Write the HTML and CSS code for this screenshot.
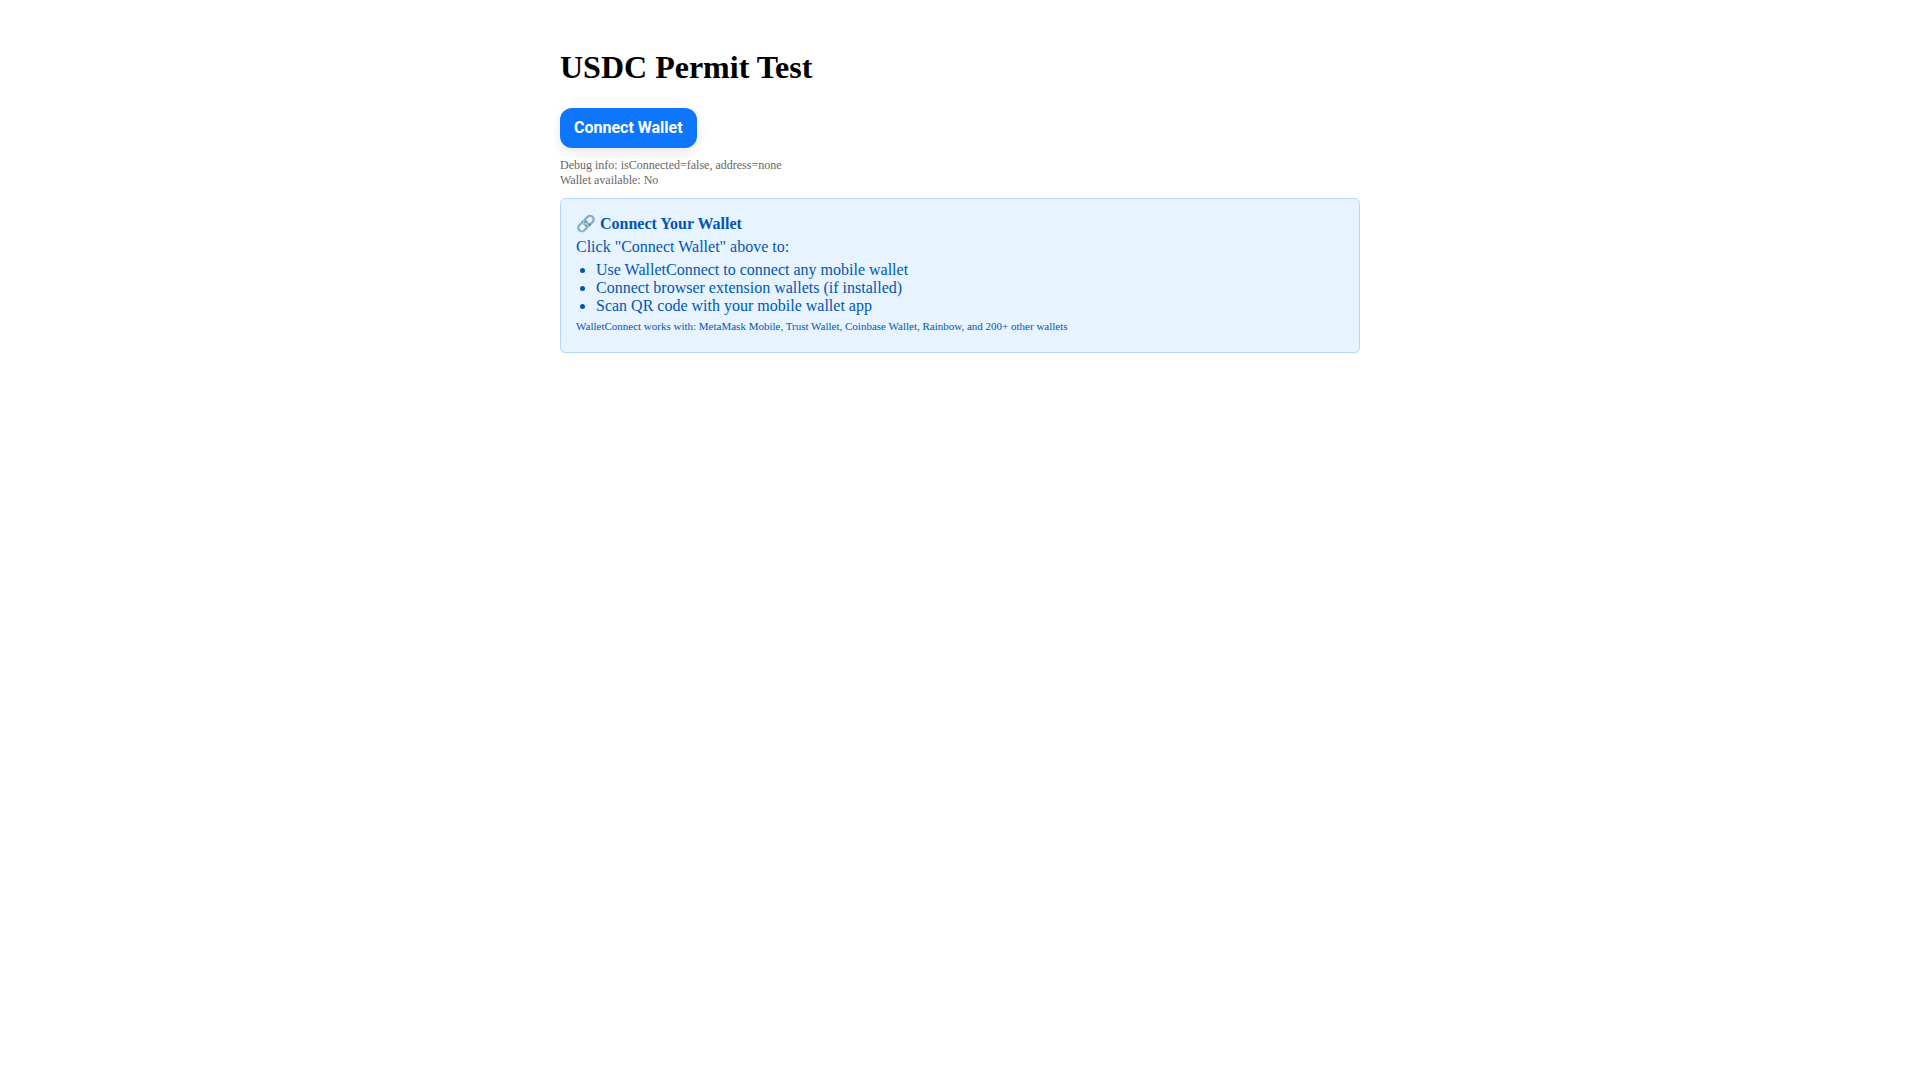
FILE: index.html
```html
<!DOCTYPE html>
<html lang="en">
<head>
    <meta charset="UTF-8">
    <meta name="viewport" content="width=device-width, initial-scale=1.0">
    <title>USDC Permit Test</title>
    <link rel="stylesheet" href="styles.css">
</head>
<body>
    <main class="container">
        <h1>USDC Permit Test</h1>
        <button type="button" class="connect-button">Connect Wallet</button>
        <div class="debug">
            Debug info: isConnected=false, address=none<br>
            Wallet available: No
        </div>
        <div class="notice">
            <p><strong>🔗 Connect Your Wallet</strong></p>
            <p>Click "Connect Wallet" above to:</p>
            <ul>
                <li>Use WalletConnect to connect any mobile wallet</li>
                <li>Connect browser extension wallets (if installed)</li>
                <li>Scan QR code with your mobile wallet app</li>
            </ul>
            <p class="notice-small">WalletConnect works with: MetaMask Mobile, Trust Wallet, Coinbase Wallet, Rainbow, and 200+ other wallets</p>
        </div>
    </main>
</body>
</html>
```
FILE: styles.css
```css
body {
    margin: 8px;
    background: #fff;
    color: #000;
    font-family: 'Liberation Serif', serif;
    font-size: 16px;
}

.container {
    max-width: 800px;
    margin: 0 auto;
    padding: 20px;
}

h1 {
    margin: 21px 0 22px;
    font-size: 32px;
    line-height: 37px;
}

.connect-button {
    display: block;
    padding: 10px 14px 11px;
    border: none;
    border-radius: 12px;
    background: #0e76fd;
    box-shadow: 0 4px 12px rgba(0, 0, 0, 0.1);
    color: #fff;
    font-family: Roboto, sans-serif;
    font-size: 16px;
    font-weight: 700;
    line-height: 19px;
    cursor: pointer;
}

.debug {
    margin: 10px 0;
    color: #666;
    font-size: 12px;
    line-height: 15px;
}

.notice {
    padding: 15px;
    border: 1px solid #b3d9ff;
    border-radius: 5px;
    background: #e7f3ff;
    color: #0056b3;
}

.notice p {
    margin: 0 0 5px;
}

.notice ul {
    margin: 5px 0;
    padding-left: 20px;
}

.notice .notice-small {
    font-size: 11px;
}
```
